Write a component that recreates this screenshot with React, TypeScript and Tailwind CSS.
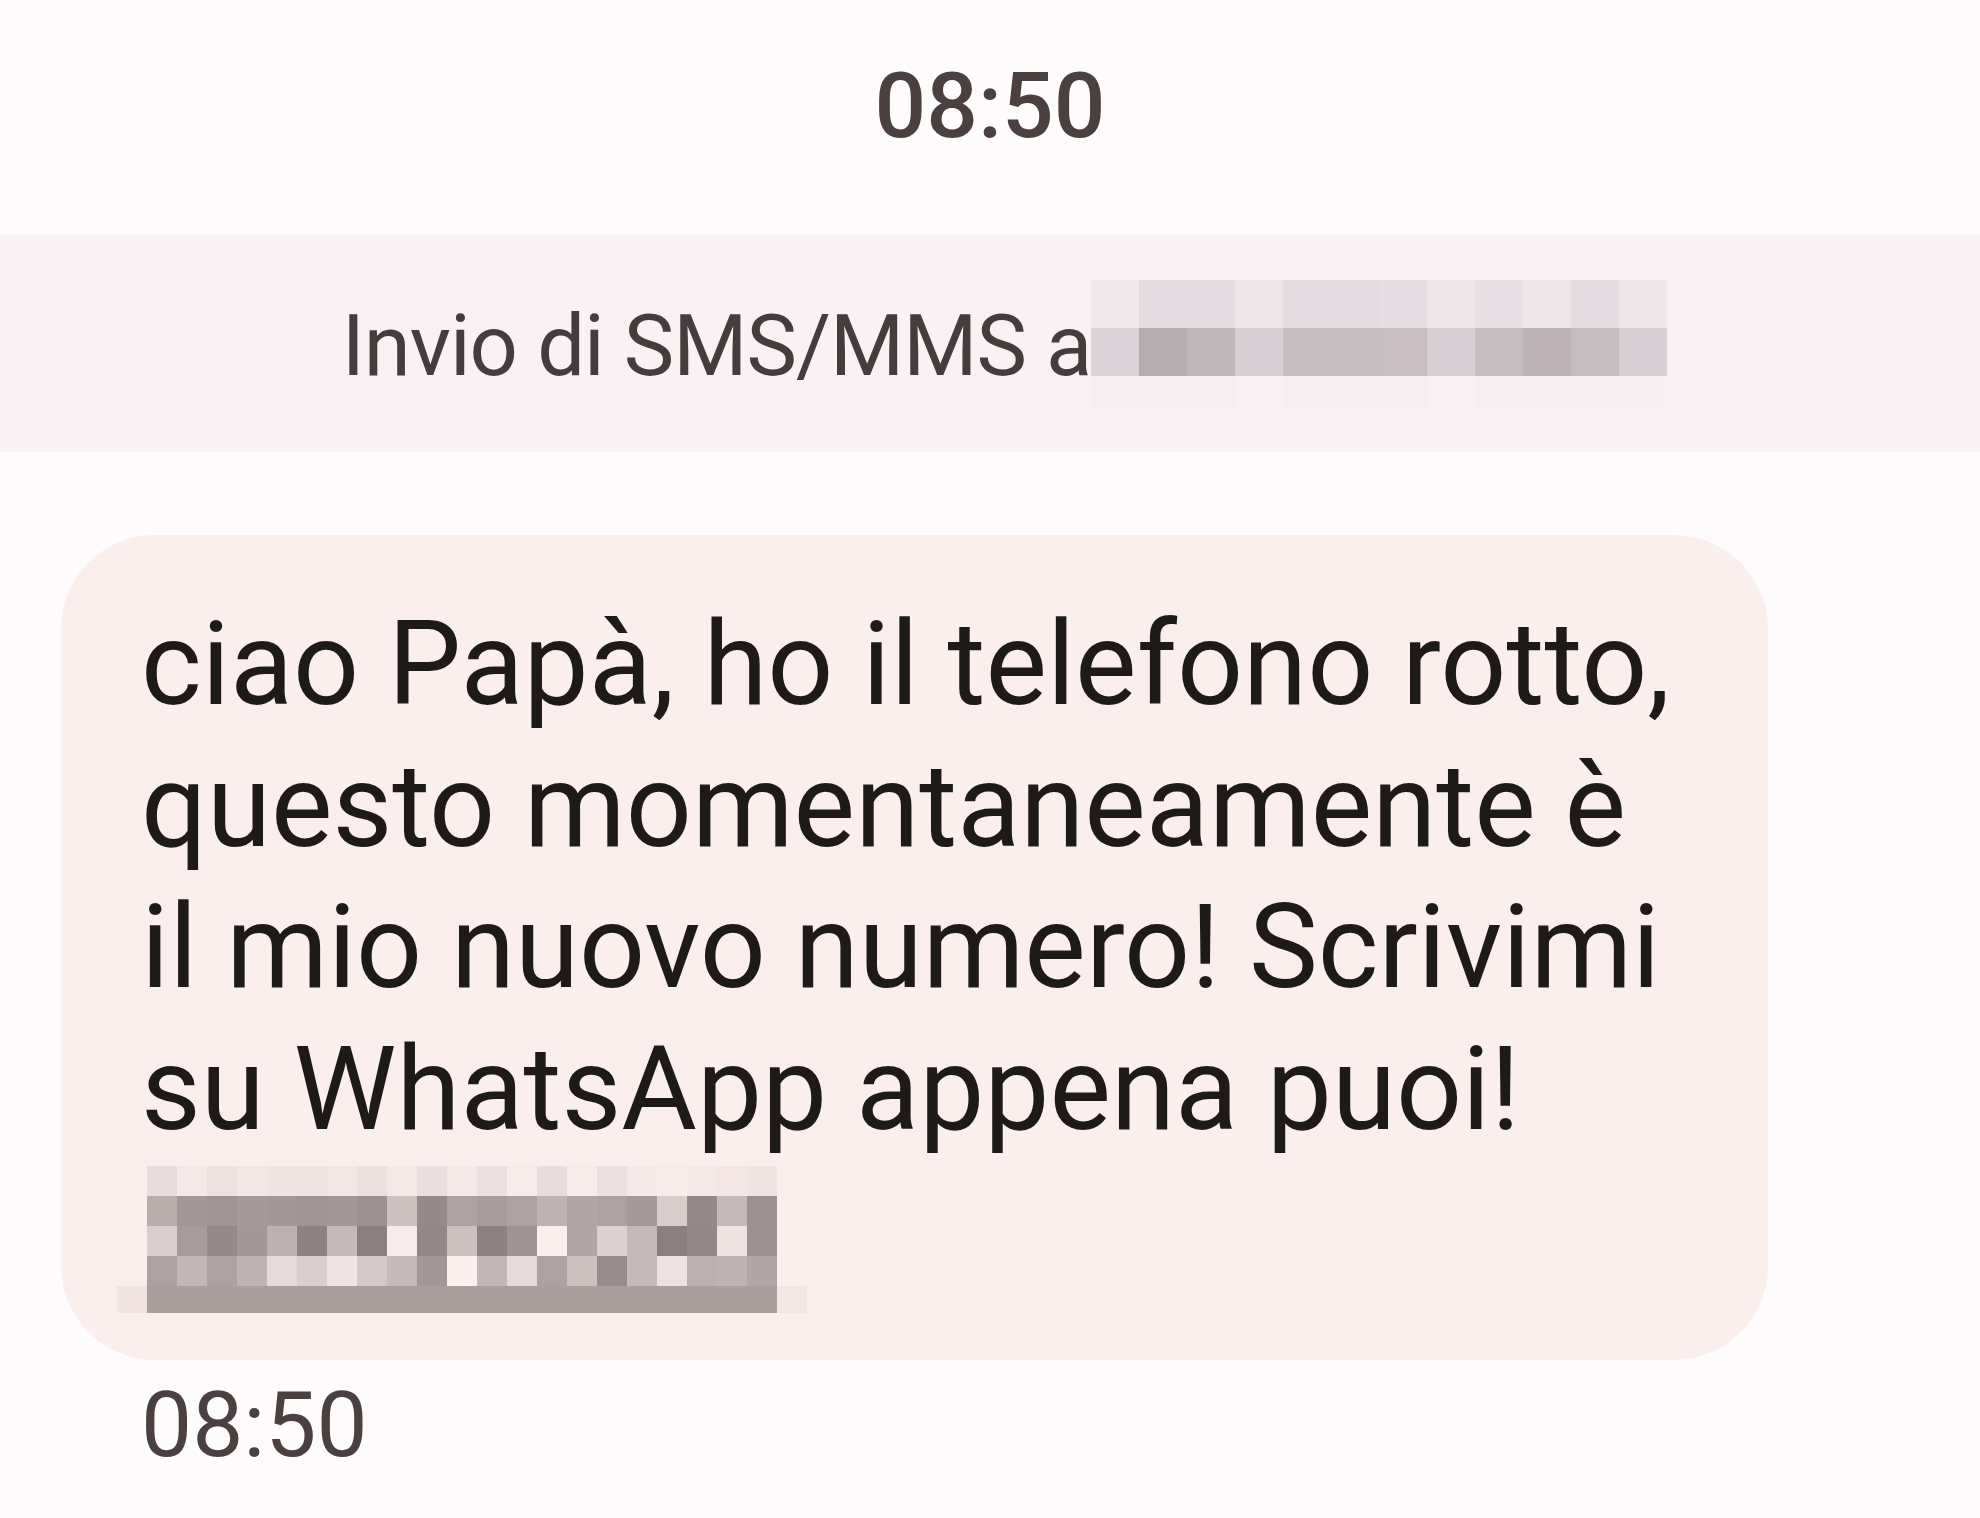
import React from "react";

const BANNER_ROWS: string[][] = [
  ["#efe9ec", "#e3dbe0", "#e3dbe0", "#ede7ea", "#e3dbe0", "#e3dbe0", "#e5dde2", "#ede7ea", "#e6dfe3", "#ede7ea", "#e3dbe0", "#ede7ea"],
  ["#dcd4d8", "#b5adaf", "#c0b7ba", "#d7cfd3", "#c6bdc0", "#c6bdc0", "#c8bec1", "#d7cfd3", "#c6bdc0", "#bdb3b6", "#c6bdc0", "#d7cfd3"],
  ["#f6f0f3", "#f7f1f4", "#f6f0f3", "#f8f2f5", "#f6f0f3", "#f7f1f4", "#f6f0f3", "#f8f2f5", "#f6f0f3", "#f7f1f4", "#f6f0f3", "#f7f1f4"],
];

const NUMBER_ROWS: string[][] = [
  ["#e9dcdc", "#f5e9e8", "#eee2e1", "#f3e7e6", "#f0e4e3", "#f0e4e3", "#f3e7e6", "#ede1e0", "#f5e9e8", "#eadede", "#f5e9e8", "#ecdfdf", "#f8ecea", "#e9dcdc", "#f8ecea", "#ecdfdf", "#f5e9e8", "#f8ecea", "#f5e9e8", "#f3e6e5", "#f0e4e3"],
  ["#b9aeac", "#a39897", "#a09594", "#a59a99", "#a39897", "#a09594", "#a39897", "#9d9291", "#cdc1c0", "#958a89", "#ada2a1", "#a89d9c", "#ada2a1", "#bfb4b3", "#b1a6a5", "#ada2a1", "#a59a99", "#d9cdcc", "#958a89", "#c5bab9", "#9d9291"],
  ["#dacfce", "#a89d9c", "#958a89", "#a39897", "#bcb1b0", "#8d8281", "#c5bab9", "#8b807f", "#f6ebea", "#938887", "#cdc1c0", "#8d8281", "#9f9493", "#fbefed", "#b1a6a5", "#dcd2d1", "#c5bab9", "#8b807f", "#938887", "#efe3e2", "#9d9291"],
  ["#ada2a1", "#c2b7b6", "#ada2a1", "#bfb4b3", "#e5dada", "#dacfce", "#efe4e3", "#d4c9c8", "#c5bab9", "#a39897", "#fbf0ee", "#c2b7b6", "#e5dada", "#ada2a1", "#cdc1c0", "#978c8b", "#c5bab9", "#ede2e1", "#bcb1b0", "#bfb4b3", "#b1a6a5"],
];

const roboto = { fontFamily: "Roboto, 'Noto Sans', sans-serif" };

export default function App() {
  return (
    <div className="min-h-screen w-full bg-[#fefbfd] text-[#1f1a1a]" style={roboto}>
      {/* timestamp header */}
      <div className="flex h-[235px] justify-center pt-[61px]">
        <span className="text-[91px] font-medium leading-none text-[#4b4040]">08:50</span>
      </div>

      {/* sending banner */}
      <div className="flex h-[217px] justify-center bg-[#f9f1f4] pl-[29px] pt-[45px]">
        <span className="mt-[24px] text-[85px] leading-none tracking-[-1px] text-[#463c3c]">Invio di SMS/MMS a</span>
        <div className="flex flex-col">
          {BANNER_ROWS.map((row, r) => (
            <div key={r} className={`flex ${r === 2 ? "h-[34px]" : "h-[48px]"}`}>
              {row.map((c, i) => (
                <div key={i} className="w-[48px]" style={{ backgroundColor: c }} />
              ))}
            </div>
          ))}
        </div>
      </div>

      {/* message bubble */}
      <div className="ml-[61px] mt-[83px] w-[1707px] rounded-[94px] bg-[#fbefed] pb-[47px] pl-[80px] pt-[59px]">
        <p className="text-[116px] leading-[141.6px] text-[#1f1a1a]">
          ciao Papà, ho il telefono rotto,
          <br />
          questo momentaneamente è
          <br />
          il mio nuovo numero! Scrivimi
          <br />
          su WhatsApp appena puoi!
        </p>
        <div className="ml-[6px] mt-[6px] flex flex-col">
          {NUMBER_ROWS.map((row, r) => (
            <div key={r} className="flex h-[30px]">
              {row.map((c, i) => (
                <div key={i} className="w-[30px]" style={{ backgroundColor: c }} />
              ))}
            </div>
          ))}
          <div className="-ml-[30px] flex h-[27px]">
            <div className="w-[30px] bg-[#f1e4e3]" />
            <div className="w-[630px] bg-[#ab9f9e]" />
            <div className="w-[30px] bg-[#f3e7e6]" />
          </div>
        </div>
      </div>

      {/* message time */}
      <div className="pl-[141px] pt-[20px]">
        <span className="text-[91px] leading-none text-[#4b4040]">08:50</span>
      </div>
    </div>
  );
}
